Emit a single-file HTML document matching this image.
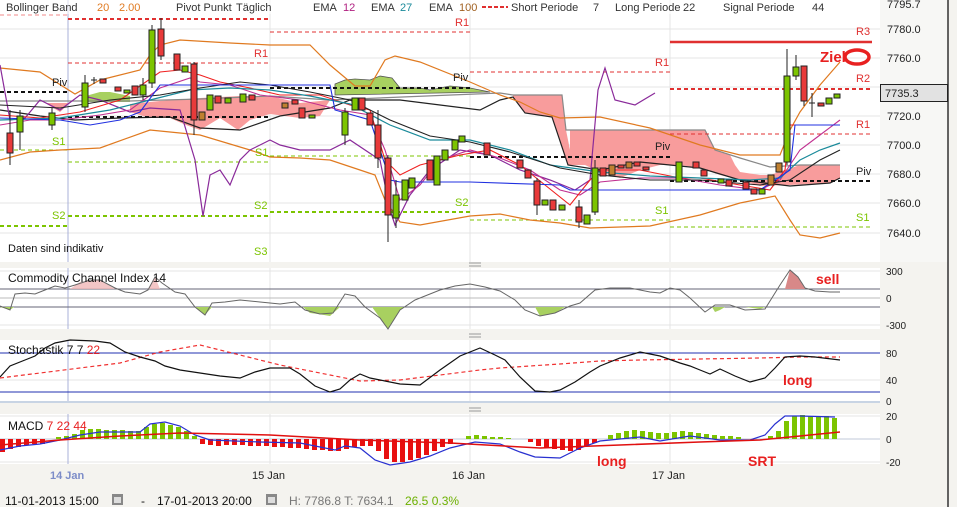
<!DOCTYPE html>
<html><head><meta charset="utf-8">
<style>
html,body{margin:0;padding:0;background:#f4f3ef;}
svg{display:block;font-family:"Liberation Sans",sans-serif;}
</style></head><body>
<svg width="957" height="507" viewBox="0 0 957 507" xmlns="http://www.w3.org/2000/svg">
<rect x="0" y="0" width="957" height="507" fill="#f4f3ef"/>
<rect x="0" y="0" width="880" height="262" fill="#fff"/>
<rect x="880" y="0" width="68" height="262" fill="#f7f7f5"/>
<line x1="948" y1="0" x2="948" y2="507" stroke="#333" stroke-width="1.5"/>
<g stroke="#e4e4e4" stroke-width="1">
<line x1="0" y1="29" x2="880" y2="29"/><line x1="0" y1="58" x2="880" y2="58"/><line x1="0" y1="87" x2="880" y2="87"/>
<line x1="0" y1="116" x2="880" y2="116"/><line x1="0" y1="145" x2="880" y2="145"/><line x1="0" y1="174" x2="880" y2="174"/>
<line x1="0" y1="203" x2="880" y2="203"/><line x1="0" y1="233" x2="880" y2="233"/>
<line x1="270" y1="0" x2="270" y2="262"/><line x1="470" y1="0" x2="470" y2="262"/><line x1="670" y1="0" x2="670" y2="262"/>
</g>
<line x1="68" y1="0" x2="68" y2="262" stroke="#a9b0d8"/>
<path d="M130,104 L160,101 L200,98 L240,96 L270,96 L300,103 L330,100 L320,116 L300,118 L270,114 L250,120 L238,130 L220,118 L200,130 L186,125 L170,118 L150,118 L130,112 Z" fill="#f89c9c"/>
<path d="M45,103 L70,103 L60,112 Z" fill="#f89c9c"/>
<path d="M513,95 L562,95 L566,130 L570,150 L570,165 L568,165 L552,117 L525,113 L513,97 Z" fill="#f89c9c"/>
<path d="M570,130 L705,130 L715,150 L730,155 L735,165 L740,172 L760,175 L770,175 L785,170 L800,165 L840,165 L840,178 L830,183 L790,185 L760,186 L740,180 L720,175 L700,168 L680,165 L660,165 L640,170 L620,178 L600,172 L585,165 L570,165 Z" fill="#f89c9c"/>
<path d="M335,84 L345,80 L355,79 L370,80 L380,76 L392,78 L400,88 L420,88 L430,90 L450,86 L470,88 L490,92 L335,95 Z" fill="#a8d060" stroke="#555" stroke-width="0.8"/>
<path d="M82,97 L100,92 L110,92 L130,96 L130,102 L82,102 Z" fill="#a8d060"/>
<polyline points="0,101 130,101 200,99 270,96 330,100 500,93 513,95 562,95 566,130 705,130 715,150 740,158 770,167 800,165 840,165" fill="none" stroke="#888" stroke-width="1.2"/>
<polyline points="0,110 40,116 75,120 120,118 170,117 200,128 240,130 280,116 330,108 350,100 400,100 440,105 480,110 500,100 513,97 525,113 552,117 568,165 600,170 640,162 700,168 740,180 790,186 830,183 840,178" fill="none" stroke="#222" stroke-width="1.2"/>
<g fill="none" stroke-dasharray="4,3">
<line x1="0" y1="15" x2="68" y2="15" stroke="#f5b0b0" stroke-width="1.5"/>
<line x1="68" y1="19" x2="270" y2="19" stroke="#e03030" stroke-width="2"/>
<line x1="68" y1="63" x2="270" y2="63" stroke="#e03030"/>
<line x1="270" y1="32" x2="470" y2="32" stroke="#e03030"/>
<line x1="470" y1="72" x2="670" y2="72" stroke="#e03030"/>
<line x1="670" y1="89" x2="872" y2="89" stroke="#e03030" stroke-width="2"/>
<line x1="670" y1="134" x2="872" y2="134" stroke="#e03030"/>
<line x1="0" y1="92" x2="68" y2="92" stroke="#111" stroke-width="2"/>
<line x1="68" y1="117" x2="270" y2="117" stroke="#111" stroke-width="2"/>
<line x1="270" y1="88" x2="470" y2="88" stroke="#111" stroke-width="2"/>
<line x1="470" y1="157" x2="670" y2="157" stroke="#111" stroke-width="2"/>
<line x1="670" y1="181" x2="872" y2="181" stroke="#111" stroke-width="2"/>
<line x1="0" y1="150" x2="68" y2="150" stroke="#7cc400"/>
<line x1="68" y1="162" x2="270" y2="162" stroke="#7cc400"/>
<line x1="270" y1="156" x2="470" y2="156" stroke="#7cc400"/>
<line x1="470" y1="220" x2="670" y2="220" stroke="#7cc400"/>
<line x1="670" y1="227" x2="872" y2="227" stroke="#7cc400"/>
<line x1="0" y1="226" x2="68" y2="226" stroke="#7cc400" stroke-width="2"/>
<line x1="68" y1="216" x2="270" y2="216" stroke="#7cc400" stroke-width="2"/>
<line x1="270" y1="212" x2="470" y2="212" stroke="#7cc400" stroke-width="2"/>
</g>
<line x1="670" y1="42" x2="872" y2="42" stroke="#e03030" stroke-width="2.5"/>
<polyline points="0,68 40,72 75,94 100,80 140,70 150,55 160,45 180,40 230,43 270,45 310,45 330,65 355,86 370,86 385,60 395,56 420,62 470,82 500,95 520,102 540,112 560,118 600,117 650,128 700,145 740,155 780,155 790,130 800,112 820,85 840,62" fill="none" stroke="#e07a20" stroke-width="1.2"/>
<polyline points="0,160 30,152 60,150 100,148 150,130 200,135 250,150 270,157 300,158 330,160 360,170 375,175 385,200 400,222 420,225 470,216 500,214 530,220 560,223 590,228 650,226 700,215 740,203 775,196 790,220 800,235 820,238 840,233" fill="none" stroke="#e07a20" stroke-width="1.2"/>
<polyline points="0,65 10,120 25,118 40,100 60,110 80,95 100,100 130,112 150,108 180,110 195,160 203,216 210,175 220,170 230,185 240,160 250,150 260,145 270,140 280,145 300,150 330,150 350,140 380,160 390,210 395,225 410,195 430,170 460,150 490,155 520,170 550,180 575,190 590,180 598,90 605,68 615,100 635,105 655,93" fill="none" stroke="#8a2a9a" stroke-width="1.2"/>
<polyline points="0,125 30,120 60,120 100,115 130,110 160,88 190,78 200,82 230,85 260,95 300,100 340,110 370,115 385,150 400,200 420,185 440,160 470,150 500,158 530,170 560,190 580,195 600,182 640,178 680,178 720,185 760,190 780,180 790,165 800,150 820,135 840,120" fill="none" stroke="#c03090" stroke-width="1.1"/>
<polyline points="0,115 40,118 80,112 120,100 160,72 180,70 200,75 220,82 250,88 280,95 320,95 350,105 370,110 385,160 400,175 420,165 460,155 490,150 520,165 545,185 570,205 590,180 600,170 640,170 680,178 700,178 740,185 770,190 785,170 790,125 840,125" fill="none" stroke="#f02020" stroke-width="1.1"/>
<polyline points="0,120 60,118 110,110 150,100 190,90 230,88 270,90 310,96 350,104 390,125 430,140 470,140 510,150 550,165 600,172 650,176 700,178 750,180 780,178 800,160 820,150 840,143" fill="none" stroke="#1a8a9a" stroke-width="1.2"/>
<polyline points="0,105 60,108 110,100 160,95 200,88 240,82 270,85 310,92 350,100 390,120 430,136 470,142 510,152 560,168 600,175 650,180 700,180 760,185 790,180 820,160 840,150" fill="none" stroke="#222" stroke-width="1.1"/>
<polyline points="0,118 60,120 90,125 120,120 140,112 160,85 330,85 335,110 370,120 385,165 390,180 400,182 470,182 560,185 570,190 650,190 700,190 760,190 790,170 795,125 840,125" fill="none" stroke="#2030e0" stroke-width="1.1"/>
<g stroke="#222" stroke-width="1">
<line x1="10" y1="110" x2="10" y2="165"/><rect x="7" y="133" width="6" height="20" fill="#e83a3a"/>
<line x1="20" y1="110" x2="20" y2="150"/><rect x="17" y="116" width="6" height="16" fill="#7cc400"/>
<line x1="52" y1="108" x2="52" y2="130"/><rect x="49" y="113" width="6" height="12" fill="#7cc400"/>
<line x1="85" y1="75" x2="85" y2="112"/><rect x="82" y="83" width="6" height="24" fill="#7cc400"/>
<line x1="94" y1="77" x2="94" y2="84"/><line x1="91" y1="80" x2="97" y2="80"/>
<rect x="100" y="79" width="6" height="4" fill="#e83a3a"/>
<rect x="115" y="87" width="6" height="4" fill="#e83a3a"/>
<rect x="124" y="90" width="6" height="3" fill="#7cc400"/>
<rect x="132" y="86" width="6" height="9" fill="#e83a3a"/>
<line x1="143" y1="78" x2="143" y2="100"/><rect x="140" y="85" width="6" height="10" fill="#7cc400"/>
<line x1="152" y1="25" x2="152" y2="88"/><rect x="149" y="30" width="6" height="53" fill="#7cc400"/>
<line x1="161" y1="18" x2="161" y2="60"/><rect x="158" y="29" width="6" height="27" fill="#e83a3a"/>
<rect x="174" y="54" width="6" height="16" fill="#e83a3a"/>
<rect x="182" y="66" width="6" height="6" fill="#7cc400"/>
<line x1="194" y1="62" x2="194" y2="135"/><rect x="191" y="64" width="6" height="56" fill="#e83a3a"/>
<rect x="199" y="112" width="6" height="8" fill="#c08030"/>
<rect x="207" y="95" width="6" height="15" fill="#7cc400"/>
<rect x="215" y="96" width="6" height="7" fill="#e83a3a"/>
<rect x="225" y="98" width="6" height="5" fill="#7cc400"/>
<rect x="240" y="94" width="6" height="8" fill="#7cc400"/>
<rect x="249" y="95" width="6" height="5" fill="#e83a3a"/>
<rect x="282" y="103" width="6" height="5" fill="#c08030"/>
<rect x="292" y="100" width="6" height="4" fill="#e83a3a"/>
<rect x="299" y="108" width="6" height="10" fill="#e83a3a"/>
<rect x="309" y="115" width="6" height="3" fill="#7cc400"/>
<line x1="345" y1="108" x2="345" y2="145"/><rect x="342" y="112" width="6" height="23" fill="#7cc400"/>
<rect x="352" y="98" width="6" height="12" fill="#7cc400"/>
<rect x="359" y="98" width="6" height="12" fill="#e83a3a"/>
<rect x="367" y="113" width="6" height="12" fill="#e83a3a"/>
<line x1="378" y1="110" x2="378" y2="168"/><rect x="375" y="125" width="6" height="33" fill="#e83a3a"/>
<line x1="388" y1="155" x2="388" y2="242"/><rect x="385" y="158" width="6" height="57" fill="#e83a3a"/>
<line x1="396" y1="180" x2="396" y2="228"/><rect x="393" y="195" width="6" height="23" fill="#7cc400"/>
<rect x="402" y="180" width="6" height="20" fill="#7cc400"/>
<rect x="409" y="178" width="6" height="10" fill="#7cc400"/>
<rect x="427" y="160" width="6" height="20" fill="#e83a3a"/>
<rect x="434" y="156" width="6" height="29" fill="#7cc400"/>
<rect x="442" y="150" width="6" height="10" fill="#7cc400"/>
<rect x="452" y="140" width="6" height="10" fill="#7cc400"/>
<rect x="459" y="136" width="6" height="6" fill="#7cc400"/>
<rect x="484" y="143" width="6" height="12" fill="#e83a3a"/>
<rect x="517" y="160" width="6" height="8" fill="#e83a3a"/>
<rect x="525" y="170" width="6" height="8" fill="#e83a3a"/>
<line x1="537" y1="178" x2="537" y2="215"/><rect x="534" y="181" width="6" height="24" fill="#e83a3a"/>
<rect x="542" y="200" width="6" height="5" fill="#7cc400"/>
<rect x="550" y="200" width="6" height="10" fill="#e83a3a"/>
<rect x="559" y="205" width="6" height="5" fill="#7cc400"/>
<line x1="579" y1="200" x2="579" y2="228"/><rect x="576" y="207" width="6" height="15" fill="#e83a3a"/>
<rect x="584" y="215" width="6" height="9" fill="#7cc400"/>
<line x1="595" y1="160" x2="595" y2="215"/><rect x="592" y="168" width="6" height="44" fill="#7cc400"/>
<rect x="600" y="168" width="6" height="8" fill="#e83a3a"/>
<rect x="609" y="165" width="6" height="10" fill="#c08030"/>
<rect x="618" y="165" width="6" height="3" fill="#e83a3a"/>
<rect x="626" y="162" width="6" height="6" fill="#c08030"/>
<rect x="634" y="162" width="6" height="4" fill="#e83a3a"/>
<rect x="643" y="167" width="6" height="3" fill="#e83a3a"/>
<rect x="676" y="162" width="6" height="20" fill="#7cc400"/>
<rect x="693" y="162" width="6" height="6" fill="#e83a3a"/>
<rect x="701" y="170" width="6" height="6" fill="#e83a3a"/>
<rect x="718" y="179" width="6" height="4" fill="#7cc400"/>
<rect x="726" y="180" width="6" height="6" fill="#e83a3a"/>
<rect x="743" y="182" width="6" height="7" fill="#e83a3a"/>
<rect x="751" y="189" width="6" height="5" fill="#e83a3a"/>
<rect x="759" y="189" width="6" height="5" fill="#7cc400"/>
<rect x="768" y="175" width="6" height="10" fill="#c08030"/>
<rect x="776" y="163" width="6" height="9" fill="#c08030"/>
<line x1="787" y1="49" x2="787" y2="165"/><rect x="784" y="76" width="6" height="86" fill="#7cc400"/>
<line x1="796" y1="55" x2="796" y2="80"/><rect x="793" y="67" width="6" height="9" fill="#7cc400"/>
<line x1="804" y1="66" x2="804" y2="106"/><rect x="801" y="66" width="6" height="35" fill="#e83a3a"/>
<line x1="812" y1="93" x2="812" y2="117"/><line x1="809" y1="103" x2="815" y2="103"/>
<rect x="818" y="103" width="6" height="3" fill="#e83a3a"/>
<rect x="826" y="98" width="6" height="6" fill="#7cc400"/>
<rect x="834" y="94" width="6" height="4" fill="#7cc400"/>
</g>
<g font-size="11" fill="#e03030">
<text x="254" y="57">R1</text><text x="455" y="26">R1</text><text x="655" y="66">R1</text>
<text x="856" y="35">R3</text><text x="856" y="82">R2</text><text x="856" y="128">R1</text>
</g>
<g font-size="11" fill="#7cc400">
<text x="52" y="145">S1</text><text x="255" y="156">S1</text><text x="655" y="214">S1</text><text x="856" y="221">S1</text>
<text x="52" y="219">S2</text><text x="254" y="209">S2</text><text x="455" y="206">S2</text><text x="254" y="255">S3</text>
</g>
<g font-size="11" fill="#222"><text x="52" y="86">Piv</text><text x="453" y="81">Piv</text><text x="655" y="150">Piv</text><text x="856" y="175">Piv</text></g>
<text x="820" y="62" font-size="15" font-weight="bold" fill="#e82020">Ziel</text>
<ellipse cx="857" cy="57" rx="12" ry="7" fill="none" stroke="#e82020" stroke-width="3.5"/>
<text x="8" y="252" font-size="11" fill="#111">Daten sind indikativ</text>
<rect x="0" y="0" width="880" height="14" fill="#fff" opacity="0.6"/>
<g font-size="11" fill="#333">
<text x="6" y="11">Bollinger Band</text><text x="97" y="11" fill="#e07a20">20</text><text x="119" y="11" fill="#e07a20">2.00</text>
<text x="176" y="11">Pivot Punkt</text><text x="236" y="11">Täglich</text>
<text x="313" y="11">EMA</text><text x="343" y="11" fill="#b02080">12</text>
<text x="371" y="11">EMA</text><text x="400" y="11" fill="#1a8a9a">27</text>
<text x="429" y="11">EMA</text><text x="459" y="11" fill="#a06020">100</text>
<line x1="482" y1="7" x2="508" y2="7" stroke="#e03030" stroke-width="2" stroke-dasharray="4,2"/>
<text x="511" y="11">Short Periode</text><text x="593" y="11">7</text>
<text x="615" y="11">Long Periode</text><text x="683" y="11">22</text>
<text x="723" y="11">Signal Periode</text><text x="812" y="11">44</text>
</g>
<g font-size="11" fill="#222">
<text x="887" y="8">7795.7</text><text x="887" y="33">7780.0</text><text x="887" y="62">7760.0</text>
<text x="887" y="120">7720.0</text><text x="887" y="149">7700.0</text><text x="887" y="178">7680.0</text>
<text x="887" y="207">7660.0</text><text x="887" y="237">7640.0</text>
</g>
<rect x="880.5" y="84.5" width="67" height="17" fill="#e2e2e2" stroke="#222"/>
<text x="885" y="97" font-size="11" fill="#222">7735.3</text>
<g stroke="#999"><line x1="469" y1="263" x2="481" y2="263"/><line x1="469" y1="266" x2="481" y2="266"/>
<line x1="469" y1="334" x2="481" y2="334"/><line x1="469" y1="337" x2="481" y2="337"/>
<line x1="469" y1="408" x2="481" y2="408"/><line x1="469" y1="411" x2="481" y2="411"/></g>
<rect x="0" y="268" width="880" height="61" fill="#fff"/>
<g stroke="#e4e4e4"><line x1="0" y1="271" x2="880" y2="271"/><line x1="0" y1="325" x2="880" y2="325"/><line x1="270" y1="268" x2="270" y2="329"/><line x1="470" y1="268" x2="470" y2="329"/><line x1="670" y1="268" x2="670" y2="329"/></g>
<line x1="68" y1="268" x2="68" y2="329" stroke="#a9b0d8"/>
<line x1="0" y1="298" x2="880" y2="298" stroke="#bbb"/>
<line x1="0" y1="289" x2="880" y2="289" stroke="#667" stroke-width="1"/>
<line x1="0" y1="307" x2="880" y2="307" stroke="#667" stroke-width="1"/>
<path d="M70,289 L80,282 L100,280 L115,289 Z M148,289 L155,277 L160,289 Z" fill="#f0b8b8" opacity="0.8"/>
<path d="M785,289 L790,270 L798,277 L805,289 Z" fill="#d88888"/>
<path d="M0,307 L10,310 L14,307 Z M195,307 L205,315 L212,307 Z M303,307 L310,313 L318,314 L330,316 L340,307 Z M372,307 L380,318 L388,329 L400,310 L405,307 Z M535,307 L540,316 L555,313 L565,307 Z M712,307 L715,312 L720,310 L725,307 Z M745,307 L765,307 L760,309 Z" fill="#a8d060"/>
<polyline points="0,306 10,310 15,294 25,293 35,294 45,290 55,286 65,288 75,285 90,280 100,280 115,288 125,292 140,294 148,290 155,277 162,283 175,292 185,294 195,307 205,315 212,303 225,302 240,300 260,302 280,304 295,302 305,310 320,314 333,313 345,294 355,296 365,307 380,318 388,329 400,310 415,300 430,294 440,290 455,286 470,284 485,287 500,291 515,300 525,310 540,316 555,313 570,306 580,303 595,290 610,288 630,288 650,292 660,293 670,288 680,290 690,298 705,312 715,305 730,305 745,310 765,309 780,285 790,270 798,277 805,288 815,291 830,292 840,292" fill="none" stroke="#666" stroke-width="1"/>
<text x="8" y="282" font-size="12" fill="#111">Commodity Channel Index  14</text>
<text x="816" y="284" font-size="14" font-weight="bold" fill="#e82020">sell</text>
<g font-size="10" fill="#222"><text x="886" y="275">300</text><text x="886" y="302">0</text><text x="886" y="329">-300</text></g>
<rect x="0" y="340" width="880" height="63" fill="#fff"/>
<g stroke="#e4e4e4"><line x1="0" y1="380" x2="880" y2="380"/><line x1="270" y1="340" x2="270" y2="403"/><line x1="470" y1="340" x2="470" y2="403"/><line x1="670" y1="340" x2="670" y2="403"/></g>
<line x1="68" y1="340" x2="68" y2="403" stroke="#a9b0d8"/>
<line x1="0" y1="353" x2="880" y2="353" stroke="#2030b0"/>
<line x1="0" y1="392" x2="880" y2="392" stroke="#2030b0"/>
<line x1="0" y1="402" x2="880" y2="402" stroke="#c8d4e4" stroke-width="2"/>
<polyline points="0,378 40,373 80,368 120,363 160,352 200,345 240,355 280,365 330,375 360,381 400,380 440,375 480,370 500,368 530,366 560,364 600,361 640,360 700,359 760,358 800,357 840,357" fill="none" stroke="#f03030" stroke-dasharray="4,3" stroke-width="1.2"/>
<polyline points="0,377 10,366 25,360 35,356 45,348 55,343 70,340 95,341 110,343 125,352 140,357 155,361 165,366 180,370 200,373 220,376 240,378 255,372 270,368 290,368 300,374 315,386 330,392 340,389 350,380 360,374 370,378 385,381 400,384 420,385 440,370 460,356 480,348 495,355 505,360 520,377 535,391 550,392 560,390 575,382 590,372 600,366 620,358 640,352 660,356 680,363 690,366 700,370 710,374 720,369 735,376 750,382 765,378 775,368 785,357 800,356 815,357 840,360" fill="none" stroke="#111" stroke-width="1.2"/>
<text x="8" y="354" font-size="12" fill="#111">Stochastik  7  7  <tspan fill="#e82020">22</tspan></text>
<text x="783" y="385" font-size="14" font-weight="bold" fill="#e82020">long</text>
<g font-size="10" fill="#222"><text x="886" y="357">80</text><text x="886" y="384">40</text><text x="886" y="405">0</text></g>
<rect x="0" y="414" width="880" height="50" fill="#fff"/>
<g stroke="#e4e4e4"><line x1="0" y1="416" x2="880" y2="416"/><line x1="0" y1="462" x2="880" y2="462"/><line x1="270" y1="414" x2="270" y2="464"/><line x1="470" y1="414" x2="470" y2="464"/><line x1="670" y1="414" x2="670" y2="464"/></g>
<line x1="68" y1="414" x2="68" y2="464" stroke="#a9b0d8"/>
<line x1="0" y1="439" x2="880" y2="439" stroke="#c0c8d8"/>
<g fill="#e81010">
<rect x="0" y="439" width="5" height="13"/><rect x="8" y="439" width="5" height="10"/><rect x="16" y="439" width="5" height="8"/><rect x="24" y="439" width="5" height="6"/><rect x="32" y="439" width="5" height="5"/><rect x="40" y="439" width="5" height="5"/>
<rect x="200" y="439" width="5" height="5"/><rect x="208" y="439" width="5" height="6"/><rect x="216" y="439" width="5" height="7"/><rect x="224" y="439" width="5" height="6"/><rect x="232" y="439" width="5" height="6"/><rect x="240" y="439" width="5" height="6"/><rect x="248" y="439" width="5" height="7"/><rect x="256" y="439" width="5" height="7"/><rect x="264" y="439" width="5" height="7"/><rect x="272" y="439" width="5" height="8"/><rect x="280" y="439" width="5" height="8"/><rect x="288" y="439" width="5" height="9"/><rect x="296" y="439" width="5" height="9"/><rect x="304" y="439" width="5" height="10"/><rect x="312" y="439" width="5" height="11"/><rect x="320" y="439" width="5" height="11"/><rect x="328" y="439" width="5" height="12"/><rect x="336" y="439" width="5" height="12"/><rect x="344" y="439" width="5" height="10"/><rect x="352" y="439" width="5" height="8"/><rect x="360" y="439" width="5" height="7"/><rect x="368" y="439" width="5" height="7"/>
<rect x="376" y="439" width="5" height="12"/><rect x="384" y="439" width="5" height="20"/><rect x="392" y="439" width="5" height="23"/><rect x="400" y="439" width="5" height="23"/><rect x="408" y="439" width="5" height="21"/><rect x="416" y="439" width="5" height="19"/><rect x="424" y="439" width="5" height="16"/><rect x="432" y="439" width="5" height="12"/><rect x="440" y="439" width="5" height="8"/><rect x="448" y="439" width="5" height="5"/>
<rect x="528" y="439" width="5" height="3"/><rect x="536" y="439" width="5" height="7"/><rect x="544" y="439" width="5" height="9"/><rect x="552" y="439" width="5" height="10"/><rect x="560" y="439" width="5" height="11"/><rect x="568" y="439" width="5" height="12"/><rect x="576" y="439" width="5" height="11"/><rect x="584" y="439" width="5" height="7"/><rect x="592" y="439" width="5" height="4"/>
</g>
<g fill="#7cc400">
<rect x="56" y="437" width="5" height="2"/><rect x="64" y="436" width="5" height="3"/><rect x="72" y="434" width="5" height="5"/><rect x="80" y="430" width="5" height="9"/><rect x="88" y="429" width="5" height="10"/><rect x="96" y="429" width="5" height="10"/><rect x="104" y="430" width="5" height="9"/><rect x="112" y="430" width="5" height="9"/><rect x="120" y="430" width="5" height="9"/><rect x="128" y="431" width="5" height="8"/><rect x="136" y="431" width="5" height="8"/><rect x="144" y="427" width="5" height="12"/><rect x="152" y="424" width="5" height="15"/><rect x="160" y="423" width="5" height="16"/><rect x="168" y="425" width="5" height="14"/><rect x="176" y="427" width="5" height="12"/><rect x="184" y="431" width="5" height="8"/><rect x="192" y="436" width="5" height="3"/>
<rect x="466" y="436" width="5" height="3"/><rect x="474" y="435" width="5" height="4"/><rect x="482" y="436" width="5" height="3"/><rect x="490" y="437" width="5" height="2"/><rect x="498" y="437" width="5" height="2"/><rect x="506" y="438" width="5" height="1"/>
<rect x="608" y="435" width="5" height="4"/><rect x="616" y="433" width="5" height="6"/><rect x="624" y="431" width="5" height="8"/><rect x="632" y="430" width="5" height="9"/><rect x="640" y="431" width="5" height="8"/><rect x="648" y="432" width="5" height="7"/><rect x="656" y="433" width="5" height="6"/><rect x="664" y="433" width="5" height="6"/><rect x="672" y="432" width="5" height="7"/><rect x="680" y="431" width="5" height="8"/><rect x="688" y="432" width="5" height="7"/><rect x="696" y="433" width="5" height="6"/><rect x="704" y="434" width="5" height="5"/><rect x="712" y="435" width="5" height="4"/><rect x="720" y="436" width="5" height="3"/><rect x="728" y="436" width="5" height="3"/><rect x="736" y="437" width="5" height="2"/>
<rect x="768" y="436" width="5" height="3"/><rect x="776" y="431" width="5" height="8"/><rect x="784" y="421" width="5" height="18"/><rect x="792" y="416" width="5" height="23"/><rect x="800" y="415" width="5" height="24"/><rect x="808" y="416" width="5" height="23"/><rect x="816" y="416" width="5" height="23"/><rect x="824" y="416" width="5" height="23"/><rect x="832" y="418" width="5" height="21"/>
</g>
<polyline points="0,450 20,446 40,444 60,440 80,435 100,432 140,432 150,424 165,422 180,426 195,435 210,440 260,442 300,443 335,450 345,446 360,448 375,460 390,465 410,462 430,456 450,448 475,442 500,444 520,452 535,457 560,458 580,448 600,441 620,439 640,437 660,441 690,436 720,440 750,440 765,435 775,424 785,416 800,416 835,417" fill="none" stroke="#2830d0" stroke-width="1.2"/>
<polyline points="0,445 60,440 120,436 180,433 270,435 360,440 450,443 540,448 620,445 700,442 760,440 800,436 840,432" fill="none" stroke="#e01010" stroke-width="1.5"/>
<text x="8" y="430" font-size="12" fill="#111">MACD  <tspan fill="#e82020">7  22  44</tspan></text>
<text x="597" y="466" font-size="14" font-weight="bold" fill="#e82020">long</text>
<text x="748" y="466" font-size="14" font-weight="bold" fill="#e82020">SRT</text>
<g font-size="10" fill="#222"><text x="886" y="420">20</text><text x="886" y="443">0</text><text x="886" y="466">-20</text></g>
<g font-size="11" fill="#222">
<text x="50" y="479" fill="#7c8cc8" font-weight="bold">14 Jan</text><text x="252" y="479">15 Jan</text><text x="452" y="479">16 Jan</text><text x="652" y="479">17 Jan</text>
</g>
<g font-size="12" fill="#111">
<text x="5" y="505">11-01-2013 15:00</text>
<rect x="112" y="494" width="11" height="11" fill="#888"/><rect x="114" y="497" width="7" height="6" fill="#ddd"/>
<text x="141" y="505">-</text>
<text x="157" y="505">17-01-2013 20:00</text>
<rect x="266" y="494" width="11" height="11" fill="#888"/><rect x="268" y="497" width="7" height="6" fill="#ddd"/>
<text x="289" y="505" fill="#777">H: 7786.8  T: 7634.1</text>
<text x="405" y="505" fill="#6cb000">26.5  0.3%</text>
</g>
</svg>
</body></html>
